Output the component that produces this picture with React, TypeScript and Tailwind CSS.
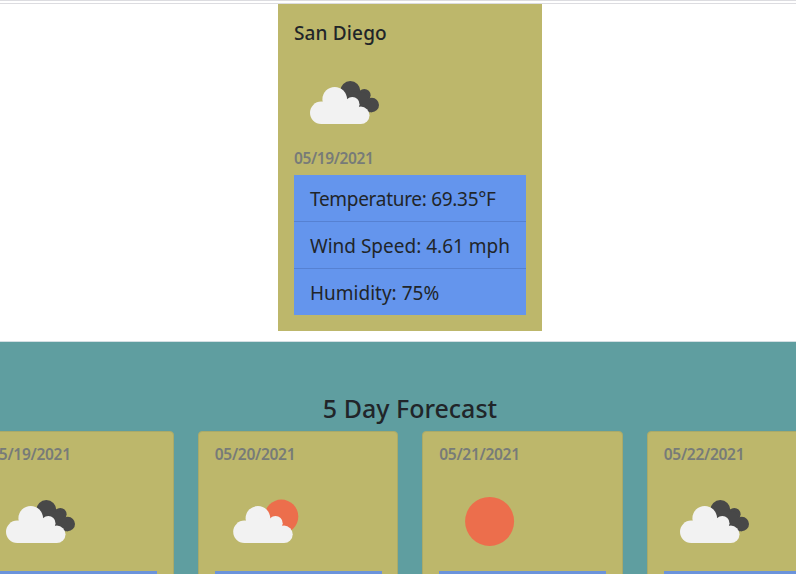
import React from "react";

type Sky = "clouds" | "partly" | "clear";

function Cloud() {
  return (
    <g fill="#f2f2f2">
      <circle cx="27.2" cy="62.8" r="11.2" />
      <circle cx="40.7" cy="49.3" r="12.3" />
      <circle cx="58.3" cy="54.2" r="7.2" />
      <circle cx="66.8" cy="65.3" r="8.7" />
      <path d="M27 74V55L40 49L58 54L67 66V74Z" />
    </g>
  );
}

function WeatherIcon({ sky }: { sky: Sky }) {
  return (
    <svg viewBox="0 0 100 100" className="block size-[100px]">
      {sky === "clouds" && (
        <>
          <g fill="#484848">
            <circle cx="56.3" cy="41" r="10" />
            <circle cx="70.3" cy="45.2" r="6.3" />
            <circle cx="77.8" cy="55" r="7.2" />
            <path d="M56 41L71 43L78 54V62.2H68L56 50Z" />
          </g>
          <Cloud />
        </>
      )}
      {sky === "partly" && (
        <>
          <circle cx="66.4" cy="47.5" r="16.9" fill="#ec6e4c" />
          <g transform="translate(2.2 0)">
            <Cloud />
          </g>
        </>
      )}
      {sky === "clear" && <circle cx="50.6" cy="52.4" r="24.5" fill="#ec6e4c" />}
    </svg>
  );
}

const days: { date: string; sky: Sky }[] = [
  { date: "05/19/2021", sky: "clouds" },
  { date: "05/20/2021", sky: "partly" },
  { date: "05/21/2021", sky: "clear" },
  { date: "05/22/2021", sky: "clouds" },
];

export default function App() {
  return (
    <div className="flex h-[574px] w-[796px] flex-col overflow-hidden bg-white font-['Noto_Sans',sans-serif] text-[#212529]">
      <div className="h-1 shrink-0 border-y border-[#dcdce0]" />
      <section className="ml-[278px] h-[327px] w-[264px] shrink-0 bg-[#bdb76b] px-4 pt-[17px]">
        <h1 className="h-[29px] whitespace-nowrap text-[19px] font-medium leading-6 tracking-[0.15px]">San Diego</h1>
        <WeatherIcon sky="clouds" />
        <p className="h-[25px] text-[15.5px] font-semibold leading-[16px] tracking-[-0.38px] text-[#777b78]">05/19/2021</p>
        <ul className="divide-y divide-[#5681d2] bg-[#6495ed] text-[19px] leading-[30px]">
          <li className="h-[47px] whitespace-nowrap px-4 pt-[9px] tracking-[-0.3px]">Temperature: 69.35°F</li>
          <li className="h-[47px] whitespace-nowrap px-4 pt-[9px]">Wind Speed: 4.61 mph</li>
          <li className="h-[46px] whitespace-nowrap px-4 pt-[9px]">Humidity: 75%</li>
        </ul>
      </section>
      <section className="mt-[10px] flex-1 border-t border-[#d3dfe3] bg-[#5f9ea0] pt-[50px]">
        <h2 className="h-[39px] pl-[24px] text-center text-[25px] font-medium leading-[32px]">5 Day Forecast</h2>
        <div className="-ml-[26.6px] flex gap-6">
          {days.map((day) => (
            <article
              key={day.date}
              className="h-[300px] w-[200.5px] shrink-0 rounded border border-[#a9aa69] bg-[#bdb76b] px-[15.8px] pt-[13px]"
            >
              <p className="h-[24px] text-[15.5px] font-semibold leading-[18px] tracking-[-0.27px] text-[#777b78]">{day.date}</p>
              <WeatherIcon sky={day.sky} />
              <div className="mt-[2px] h-[140px] bg-[#6b93db]" />
            </article>
          ))}
        </div>
      </section>
    </div>
  );
}
